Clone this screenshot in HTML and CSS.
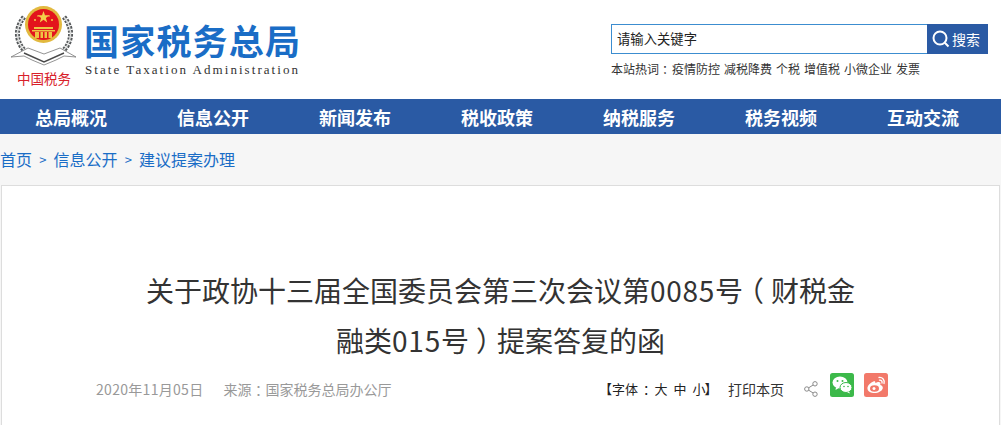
FILE: index.html
```html
<!DOCTYPE html>
<html lang="zh-CN">
<head>
<meta charset="utf-8">
<title>关于政协十三届全国委员会第三次会议第0085号（财税金融类015号）提案答复的函</title>
<link rel="stylesheet" href="styles.css">
</head>
<body>
<header class="header">
  <div class="logo">
    <div class="emblem">
      <svg class="emblem-svg" width="66" height="62" viewBox="0 0 66 62">
        <g fill="none" stroke-linecap="butt">
          <path d="M13 12C3 24 4 40 19 50" stroke="#55585a" stroke-width="5" stroke-dasharray="2.500 1.200"/>
          <path d="M53 12C63 24 62 40 47 50" stroke="#55585a" stroke-width="5" stroke-dasharray="2.500 1.200"/>
          <path d="M13 12C3 24 4 40 19 50" stroke="#d8dad9" stroke-width="1.500"/>
          <path d="M53 12C63 24 62 40 47 50" stroke="#d8dad9" stroke-width="1.500"/>
        </g>
        <path d="M0 52L17 43L33 49L49 43L65 52L53 51L45 55L33 60L21 55L13 51Z" fill="#fff" stroke="#777" stroke-width=".8"/>
        <path d="M13 48L33 57L53 48" fill="none" stroke="#4a4a4a" stroke-width="1.400"/>
        <circle cx="32.500" cy="19.500" r="18.500" fill="#e2b93f"/>
        <circle cx="32.500" cy="19.500" r="15.500" fill="#e3141c"/>
        <path d="M32.500 6l1.500 4.300h4.500l-3.600 2.700 1.300 4.400-3.700-2.600-3.700 2.600 1.300-4.400-3.600-2.700H31z" fill="#f3d04a"/>
        <circle cx="24" cy="15" r="1" fill="#f3d04a"/>
        <circle cx="41" cy="15" r="1" fill="#f3d04a"/>
        <circle cx="27" cy="11" r=".8" fill="#f3d04a"/>
        <circle cx="38" cy="11" r=".8" fill="#f3d04a"/>
        <path d="M23 22h19v2H23zM21 25h23v1.500H21zM24 27h17v6H24z" fill="#eec544"/>
        <path d="M28 27h1.500v6H28zM32 27h1.500v6H32zM36 27h1.500v6H36z" fill="#e3141c"/>
      </svg>
      <span class="emblem-text">中国税务</span>
    </div>
    <div class="brand">
      <div class="brand-cn">国家税务总局</div>
      <div class="brand-en">State Taxation Administration</div>
    </div>
  </div>
  <div class="tools">
    <form class="search">
      <div class="search-input">请输入关键字</div>
      <div class="search-btn">
        <svg width="18" height="18" viewBox="0 0 18 18" fill="none" stroke="#fff" stroke-width="2"><circle cx="8" cy="8" r="6.500"/><path d="M12.800 12.800L16.500 16.500"/></svg>
        <span>搜索</span>
      </div>
    </form>
    <div class="hot">
      <span class="hot-label">本站热词<span class="mid">：</span></span>
      <a>疫情防控</a><a>减税降费</a><a>个税</a><a>增值税</a><a>小微企业</a><a>发票</a>
    </div>
  </div>
</header>
<nav class="nav">
  <a>总局概况</a><a>信息公开</a><a>新闻发布</a><a>税收政策</a><a>纳税服务</a><a>税务视频</a><a>互动交流</a>
</nav>
<main class="page">
  <div class="crumbs"><a>首页</a><span class="sep">&gt;</span><a>信息公开</a><span class="sep">&gt;</span><a>建议提案办理</a></div>
  <article class="card">
    <h1 class="title">
      <span class="line">关于政协十三届全国委员会第三次会议第<span class="num">0085</span>号<span class="mid">（</span>财税金</span>
      <span class="line">融类<span class="num">015</span>号<span class="mid">）</span>提案答复的函</span>
    </h1>
    <div class="meta">
      <div class="meta-left"><span class="date">2020年11月05日</span><span>来源<span class="mid">：</span>国家税务总局办公厅</span></div>
      <div class="meta-right">
        <span class="fontsize">【字体<span class="mid">：</span><span class="sizes"><a>大</a><a>中</a><a>小</a></span>】</span>
        <span class="print">打印本页</span>
        <svg class="share" width="14" height="16" viewBox="0 0 14 16" fill="none" stroke="#8a8a8a" stroke-width="1"><circle cx="2.800" cy="8" r="2.200"/><circle cx="11" cy="2.800" r="2.200"/><circle cx="11" cy="13.200" r="2.200"/><path d="M4.700 6.800L9.100 4M4.700 9.200L9.100 12"/></svg>
        <svg class="social" width="24" height="24" viewBox="0 0 24 24"><rect width="24" height="24" rx="2.500" fill="#3cb94a"/><ellipse cx="10" cy="9.500" rx="7.500" ry="6" fill="#fff"/><path d="M6 14l-.5 3 3-1.800z" fill="#fff"/><ellipse cx="16" cy="14.500" rx="6" ry="5" fill="#fff" stroke="#3cb94a"/><path d="M19 18.500l1 2-2.800-1.200z" fill="#fff"/><circle cx="7.500" cy="8" r="1" fill="#3cb94a"/><circle cx="12.500" cy="8" r="1" fill="#3cb94a"/><circle cx="14" cy="13.500" r=".8" fill="#3cb94a"/><circle cx="18" cy="13.500" r=".8" fill="#3cb94a"/></svg>
        <svg class="social" width="24" height="24" viewBox="0 0 24 24"><rect width="24" height="24" rx="2.500" fill="#f2796a"/><path d="M10.500 8C6 9.500 3 13 3.500 16c.6 3 4.500 4.500 8.500 4 4-.5 7-3 6.800-5.400-.1-1.500-1.600-2.300-2.600-2.600.8-2 0-3-1.500-3-1.200 0-2.700.7-3.400 1.300.3-1.300-.3-2.700-1.300-2.300z" fill="#fff"/><ellipse cx="10.500" cy="15.500" rx="4.500" ry="3.300" fill="#f2796a"/><circle cx="10" cy="15.500" r="1.500" fill="#fff"/><path d="M15 4.500c3.500-.5 6 2.500 5 6M15.500 7.200c1.700-.3 3 1 2.500 2.800" fill="none" stroke="#fff" stroke-width="1.300" stroke-linecap="round"/></svg>
      </div>
    </div>
  </article>
</main>
</body>
</html>
```
FILE: styles.css
```css
* { box-sizing: border-box; }
html, body { margin: 0; padding: 0; }
body {
  width: 1001px;
  height: 425px;
  overflow: hidden;
  background: #fff;
  color: #333;
  font-family: "Noto Sans CJK SC", "Liberation Sans", sans-serif;
}
.mid {
  font-feature-settings: "halt";
  padding: 0 .25em;
}
.header {
  height: 99px;
  display: flex;
  justify-content: space-between;
  padding: 0 13px 0 11px;
}
.logo { display: flex; gap: 8px; }
.emblem {
  width: 66px;
  display: flex;
  flex-direction: column;
  align-items: center;
  padding-top: 5px;
}
.emblem-svg { display: block; flex: none; }
.emblem-text {
  margin-top: 1px;
  font-size: 13.500px;
  line-height: 20px;
  font-weight: 400;
  color: #d8202a;
  white-space: nowrap;
}
.brand { padding-top: 17px; }
.brand-cn {
  margin-left: -1px;
  font-size: 35px;
  line-height: 46px;
  font-weight: 700;
  letter-spacing: 1.200px;
  color: #1a6dc6;
  white-space: nowrap;
}
.brand-en {
  font-family: "Liberation Serif", serif;
  font-size: 13px;
  line-height: 14px;
  letter-spacing: 2.050px;
  color: #333;
  white-space: nowrap;
}
.tools { width: 377px; padding-top: 24px; }
.search { display: flex; height: 30px; margin: 0; }
.search-input {
  flex: 1;
  border: 1px solid #3c8dd0;
  border-right: 0;
  padding-left: 5px;
  font-size: 13.330px;
  line-height: 28px;
  color: #222;
}
.search-btn {
  width: 61px;
  background: #2a5aa4;
  color: #fff;
  display: flex;
  align-items: center;
  gap: 2px;
  padding-left: 5px;
  font-size: 14px;
}
.hot {
  display: flex;
  gap: 4px;
  margin-top: 6px;
  font-size: 12px;
  line-height: 18px;
  color: #333;
}
.hot-label { margin-right: -3px; }
.nav {
  height: 35px;
  background: #2a5aa4;
  display: grid;
  grid-template-columns: repeat(7, 142px);
}
.nav a {
  color: #fff;
  font-size: 18px;
  font-weight: 700;
  line-height: 37px;
  text-align: center;
}
.page { background: #f6f6f6; height: 291px; padding: 0 1px; }
.crumbs {
  height: 51px;
  margin-left: -1px;
  font-size: 16px;
  line-height: 51px;
  color: #1a6dc6;
  display: flex;
}
.crumbs a { color: #1a6dc6; }
.crumbs .sep { width: 21.500px; text-align: center; font-size: 13px; }
.card {
  background: #fff;
  border: 1px solid #ddd;
  height: 260px;
  padding: 79px 0 0;
}
.title {
  margin: 0;
  font-size: 28px;
  font-weight: 400;
  line-height: 50px;
  text-align: center;
  color: #333;
}
.line { display: block; }
.num { letter-spacing: .75px; }
.meta {
  display: flex;
  justify-content: space-between;
  margin-top: 9px;
  padding: 0 111px 0 94px;
  height: 26px;
}
.meta-left {
  display: flex;
  gap: 20px;
  font-size: 14px;
  line-height: 30px;
  color: #999;
}
.date { letter-spacing: .3px; }
.meta-right { display: flex; align-items: flex-start; font-size: 13px; line-height: 30px; }
.fontsize { width: 129px; white-space: nowrap; color: #222; }
.fontsize .mid { padding: 0 5px; }
.sizes { display: inline-flex; gap: 6px; margin-right: -1px; }
.print { width: 76px; font-size: 14px; }
.share { margin: 7px 12px 0 0; }
.social { margin: -1px 10px 0 0; }
.social:last-child { margin-right: 0; }
```
